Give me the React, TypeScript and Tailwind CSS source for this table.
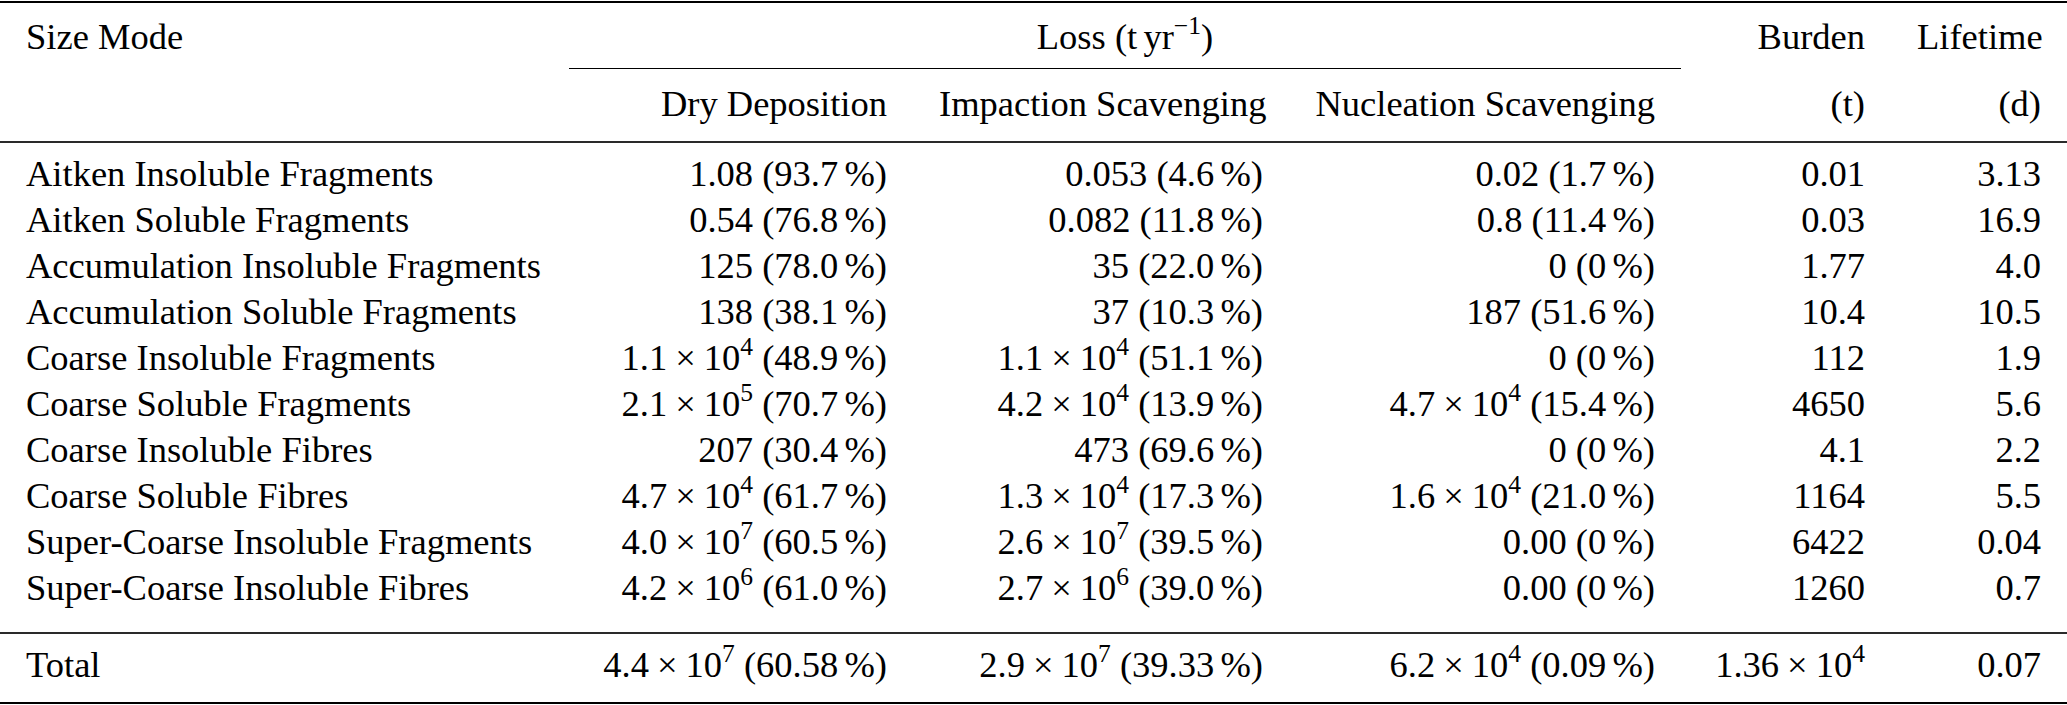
import React from "react";

/**
 * One numeric cell: mantissa, optional power of ten, optional share in percent
 */
type Val = { m: string; e?: string; p?: string };

const cols = "grid grid-cols-[569px_344px_376px_392px_210px_176px]";
const cell = "px-[26px] whitespace-nowrap";

const rows: { mode: string; dry: Val; imp: Val; nuc: Val; burden: Val; life: string }[] = [
  { mode: "Aitken Insoluble Fragments", dry: { m: "1.08", p: "93.7" }, imp: { m: "0.053", p: "4.6" }, nuc: { m: "0.02", p: "1.7" }, burden: { m: "0.01" }, life: "3.13" },
  { mode: "Aitken Soluble Fragments", dry: { m: "0.54", p: "76.8" }, imp: { m: "0.082", p: "11.8" }, nuc: { m: "0.8", p: "11.4" }, burden: { m: "0.03" }, life: "16.9" },
  { mode: "Accumulation Insoluble Fragments", dry: { m: "125", p: "78.0" }, imp: { m: "35", p: "22.0" }, nuc: { m: "0", p: "0" }, burden: { m: "1.77" }, life: "4.0" },
  { mode: "Accumulation Soluble Fragments", dry: { m: "138", p: "38.1" }, imp: { m: "37", p: "10.3" }, nuc: { m: "187", p: "51.6" }, burden: { m: "10.4" }, life: "10.5" },
  { mode: "Coarse Insoluble Fragments", dry: { m: "1.1", e: "4", p: "48.9" }, imp: { m: "1.1", e: "4", p: "51.1" }, nuc: { m: "0", p: "0" }, burden: { m: "112" }, life: "1.9" },
  { mode: "Coarse Soluble Fragments", dry: { m: "2.1", e: "5", p: "70.7" }, imp: { m: "4.2", e: "4", p: "13.9" }, nuc: { m: "4.7", e: "4", p: "15.4" }, burden: { m: "4650" }, life: "5.6" },
  { mode: "Coarse Insoluble Fibres", dry: { m: "207", p: "30.4" }, imp: { m: "473", p: "69.6" }, nuc: { m: "0", p: "0" }, burden: { m: "4.1" }, life: "2.2" },
  { mode: "Coarse Soluble Fibres", dry: { m: "4.7", e: "4", p: "61.7" }, imp: { m: "1.3", e: "4", p: "17.3" }, nuc: { m: "1.6", e: "4", p: "21.0" }, burden: { m: "1164" }, life: "5.5" },
  { mode: "Super-Coarse Insoluble Fragments", dry: { m: "4.0", e: "7", p: "60.5" }, imp: { m: "2.6", e: "7", p: "39.5" }, nuc: { m: "0.00", p: "0" }, burden: { m: "6422" }, life: "0.04" },
  { mode: "Super-Coarse Insoluble Fibres", dry: { m: "4.2", e: "6", p: "61.0" }, imp: { m: "2.7", e: "6", p: "39.0" }, nuc: { m: "0.00", p: "0" }, burden: { m: "1260" }, life: "0.7" },
];

const total = {
  dry: { m: "4.4", e: "7", p: "60.58" },
  imp: { m: "2.9", e: "7", p: "39.33" },
  nuc: { m: "6.2", e: "4", p: "0.09" },
  burden: { m: "1.36", e: "4" },
  life: "0.07",
};

function Sup({ children }: { children: React.ReactNode }) {
  return <sup className="relative -top-[0.6em] text-[0.7em] leading-none">{children}</sup>;
}

function Num({ v }: { v: Val }) {
  return (
    <>
      {v.m}
      {v.e && (
        <>
          <span className="mx-[0.22em]">×</span>10<Sup>{v.e}</Sup>
        </>
      )}
      {v.p && (
        <>
          {" "}({v.p}
          <span className="ml-[0.17em]">%</span>)
        </>
      )}
    </>
  );
}

function Rule({ thick = false }: { thick?: boolean }) {
  return <div className={thick ? "h-[2px] bg-black" : "h-[2px] bg-[#2a2a2a]"} />;
}

export default function App() {
  return (
    <div className="w-[2067px] h-[705px] bg-white text-black font-['Liberation_Serif','Times_New_Roman',serif] text-[36.5px] leading-[46px] overflow-hidden">
      {/* top rule */}
      <div className="pt-[1px]">
        <Rule thick />
      </div>

      {/* header, first line */}
      <div className={`${cols} h-[46px] mt-[11px]`}>
        <div className={cell}>Size Mode</div>
        <div className={`${cell} col-span-3 text-center`}>
          Loss (t<span className="ml-[0.17em]">yr</span>
          <Sup>−1</Sup>)
        </div>
        <div className={`${cell} text-right`}>Burden</div>
        <div className={`${cell} text-right`}>Lifetime</div>
      </div>

      {/* partial rule under the loss columns */}
      <div className={`${cols} mt-[8px]`}>
        <div className="col-start-2 col-span-3 h-[1px] bg-black" />
      </div>

      {/* header, second line */}
      <div className={`${cols} h-[46px] mt-[12px]`}>
        <div className={cell} />
        <div className={`${cell} text-right`}>Dry Deposition</div>
        <div className={`${cell} text-right`}>Impaction Scavenging</div>
        <div className={`${cell} text-right`}>Nucleation Scavenging</div>
        <div className={`${cell} text-right`}>(t)</div>
        <div className={`${cell} text-right`}>(d)</div>
      </div>

      <div className="mt-[14px]">
        <Rule />
      </div>

      {/* body */}
      <div className="mt-[8px]">
        {rows.map((r) => (
          <div key={r.mode} className={`${cols} h-[46px]`}>
            <div className={cell}>{r.mode}</div>
            <div className={`${cell} text-right`}>
              <Num v={r.dry} />
            </div>
            <div className={`${cell} text-right`}>
              <Num v={r.imp} />
            </div>
            <div className={`${cell} text-right`}>
              <Num v={r.nuc} />
            </div>
            <div className={`${cell} text-right`}>
              <Num v={r.burden} />
            </div>
            <div className={`${cell} text-right`}>{r.life}</div>
          </div>
        ))}
      </div>

      <div className="mt-[21px]">
        <Rule />
      </div>

      {/* total */}
      <div className={`${cols} h-[46px] mt-[8px]`}>
        <div className={cell}>Total</div>
        <div className={`${cell} text-right`}>
          <Num v={total.dry} />
        </div>
        <div className={`${cell} text-right`}>
          <Num v={total.imp} />
        </div>
        <div className={`${cell} text-right`}>
          <Num v={total.nuc} />
        </div>
        <div className={`${cell} text-right`}>
          <Num v={total.burden} />
        </div>
        <div className={`${cell} text-right`}>{total.life}</div>
      </div>

      <div className="mt-[14px]">
        <Rule thick />
      </div>
    </div>
  );
}
